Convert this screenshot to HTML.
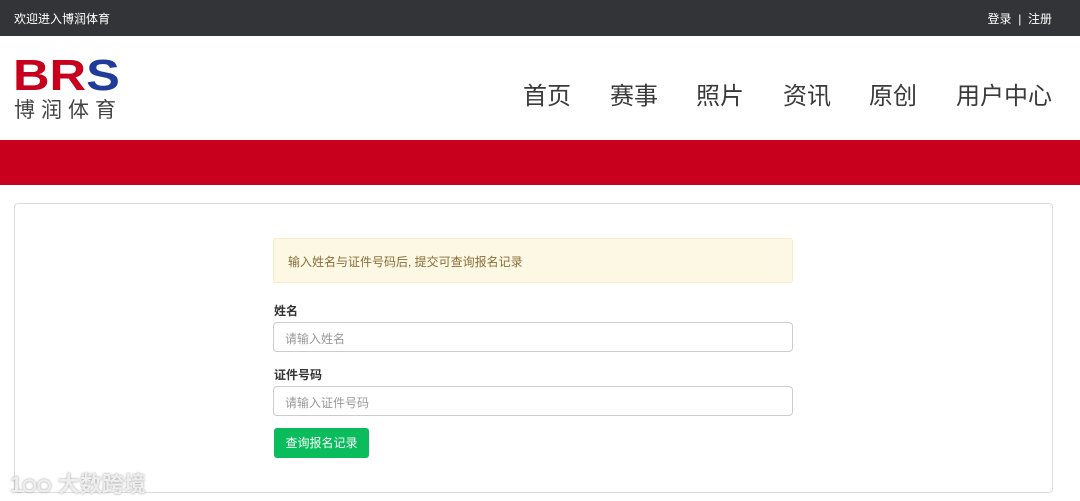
<!DOCTYPE html>
<html><head><meta charset="utf-8"><style>
*{margin:0;padding:0;box-sizing:border-box}
body{width:1080px;height:501px;background:#fff;font-family:"Liberation Sans","Noto Sans CJK SC",sans-serif;position:relative;overflow:hidden}
.top{height:36px;background:#333437;color:#fff;font-size:12px}
.top .l{position:absolute;left:14px;top:10px}
.top .r{position:absolute;right:28px;top:10px}
.nav{position:absolute;top:76px;font-size:24px;color:#3a3a3a}
.red{position:absolute;top:140px;left:0;width:1080px;height:45px;background:#c8001e}
.panel{position:absolute;left:14px;top:203px;width:1039px;height:290px;border:1px solid #ddd;border-radius:4px}
.alert{position:absolute;left:273px;top:238px;width:520px;height:45px;background:#fcf8e3;border:1px solid #faebcc;border-radius:3px;color:#8a6d3b;font-size:12px;padding:14px 14px}
.lbl{position:absolute;left:274px;font-size:12px;font-weight:bold;color:#333}
.inp{position:absolute;left:273px;width:520px;height:30px;border:1px solid #ccc;border-radius:4px;font-size:12px;color:#999;padding:7px 11px}
.btn{position:absolute;left:274px;top:428px;width:95px;height:30px;background:#0bbc5c;border-radius:3px;color:#fff;font-size:12px;text-align:center;line-height:30px}
</style></head><body>
<div class="top"><span class="l">欢迎进入博润体育</span><span class="r">登录 &nbsp;|&nbsp; 注册</span></div>
<div style="position:absolute;left:13px;top:54px;font:bold 44px 'Liberation Sans',sans-serif;line-height:44px;transform:scaleX(1.15);transform-origin:left"><span style="color:#c8001e">BR</span><span style="color:#1f3c9c">S</span></div>
<div style="position:absolute;left:14px;top:94px;font-size:21px;color:#444;letter-spacing:6px">博润体育</div>
<div class="nav" style="left:523px">首页</div>
<div class="nav" style="left:610px">赛事</div>
<div class="nav" style="left:696px">照片</div>
<div class="nav" style="left:783px">资讯</div>
<div class="nav" style="left:869px">原创</div>
<div class="nav" style="left:956px">用户中心</div>
<div class="red"></div>
<div class="panel"></div>
<div class="alert">输入姓名与证件号码后, 提交可查询报名记录</div>
<div class="lbl" style="top:302px">姓名</div>
<div class="inp" style="top:322px">请输入姓名</div>
<div class="lbl" style="top:366px">证件号码</div>
<div class="inp" style="top:386px">请输入证件号码</div>
<div class="btn">查询报名记录</div>
<div style="position:absolute;left:10px;top:467px;font-size:22px;color:#eee;font-weight:bold;text-shadow:0 0 2px #999">1੦੦ 大数跨境</div>
</body></html>
